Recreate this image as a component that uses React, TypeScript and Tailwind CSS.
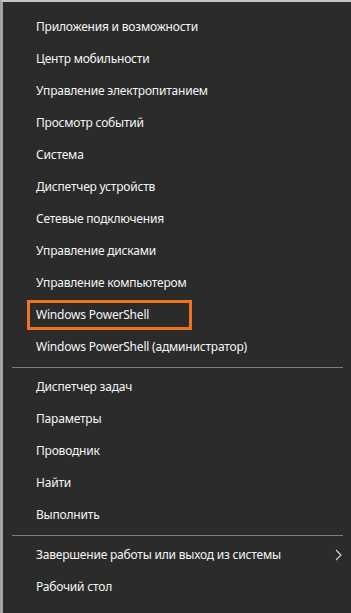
import React from 'react';

type Entry = { label: string; highlight?: boolean; submenu?: boolean } | 'sep';

const entries: Entry[] = [
  { label: 'Приложения и возможности' },
  { label: 'Центр мобильности' },
  { label: 'Управление электропитанием' },
  { label: 'Просмотр событий' },
  { label: 'Система' },
  { label: 'Диспетчер устройств' },
  { label: 'Сетевые подключения' },
  { label: 'Управление дисками' },
  { label: 'Управление компьютером' },
  { label: 'Windows PowerShell', highlight: true },
  { label: 'Windows PowerShell (администратор)' },
  'sep',
  { label: 'Диспетчер задач' },
  { label: 'Параметры' },
  { label: 'Проводник' },
  { label: 'Найти' },
  { label: 'Выполнить' },
  'sep',
  { label: 'Завершение работы или выход из системы', submenu: true },
  { label: 'Рабочий стол' },
];

export default function App() {
  return (
    <div
      className="w-[351px] h-[613px] bg-[#2b2b2b] border-l-[3px] border-t-2 border-l-[#a4a4a4] border-t-[#cbc3c7] pt-[9px] overflow-hidden text-[12px] tracking-[-0.2px] text-[#f5f5f5]"
      style={{ fontFamily: '"Noto Sans", "Open Sans", sans-serif' }}
    >
      {entries.map((e, i) =>
        e === 'sep' ? (
          <div key={i} className="h-2 flex items-center ml-[9px] mr-[8px]">
            <div className="h-px w-full bg-[#7c7c7c]" />
          </div>
        ) : (
          <div key={i} className="relative h-8 flex items-center pl-[33px]">
            <span>{e.label}</span>
            {e.highlight && (
              <div className="absolute left-[24px] top-[1px] w-[165px] h-[30px] border-[3px] border-[#f0731f]" />
            )}
            {e.submenu && (
              <svg className="absolute right-[9px] top-[10px]" width="7" height="12" viewBox="0 0 7 12">
                <path d="M1 1 L6 6 L1 11" fill="none" stroke="#d8d8d8" strokeWidth="1.1" />
              </svg>
            )}
          </div>
        )
      )}
    </div>
  );
}
